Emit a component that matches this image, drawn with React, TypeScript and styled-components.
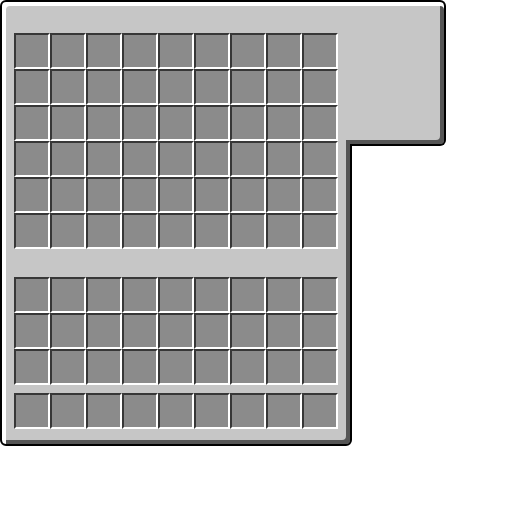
import React from "react";
import styled, { createGlobalStyle } from "styled-components";

const GlobalStyle = createGlobalStyle`
  html, body {
    margin: 0;
    padding: 0;
    background: #ffffff;
  }
`;

// L-shaped container: main chest panel + side tab on the top right
const Frame = styled.div`
  display: flex;
  align-items: flex-start;
`;

const Panel = styled.div`
  box-sizing: border-box;
  width: 352px;
  height: 446px;
  flex-shrink: 0;
  background: #c6c6c6;
  border: 2px solid #000;
  border-radius: 6px;
  box-shadow: inset 4px 4px 0 #ffffff, inset -4px -4px 0 #555555;
  padding: 31px 12px 0 12px;
  display: flex;
  flex-direction: column;
`;

const SideTab = styled.div`
  position: relative;
  z-index: 1;
  box-sizing: border-box;
  width: 100px;
  height: 146px;
  margin-left: -6px;
  background: #c6c6c6;
  border: 2px solid #000;
  border-left: none;
  border-radius: 0 6px 6px 0;
  box-shadow: inset 0 4px 0 #ffffff, inset -4px -4px 0 #555555;

  /* keep the panel's right shadow running into the inner corner */
  &::after {
    content: "";
    position: absolute;
    left: 0;
    bottom: -2px;
    width: 4px;
    height: 6px;
    background: #555555;
  }
`;

const SlotGrid = styled.div<{ $gap: number }>`
  display: grid;
  grid-template-columns: repeat(9, 36px);
  grid-auto-rows: 36px;
  margin-top: ${(p) => p.$gap}px;
`;

const Slot = styled.div`
  box-sizing: border-box;
  width: 36px;
  height: 36px;
  background: #8b8b8b;
  border-style: solid;
  border-width: 2px;
  border-color: #373737 #ffffff #ffffff #373737;
`;

const slots = (n: number) =>
  Array.from({ length: n }, (_, i) => <Slot key={i} />);

const App: React.FC = () => {
  return (
    <>
      <GlobalStyle />
      <Frame>
        <Panel>
          <SlotGrid $gap={0}>{slots(54)}</SlotGrid>
          <SlotGrid $gap={28}>{slots(27)}</SlotGrid>
          <SlotGrid $gap={8}>{slots(9)}</SlotGrid>
        </Panel>
        <SideTab />
      </Frame>
    </>
  );
};

export default App;
